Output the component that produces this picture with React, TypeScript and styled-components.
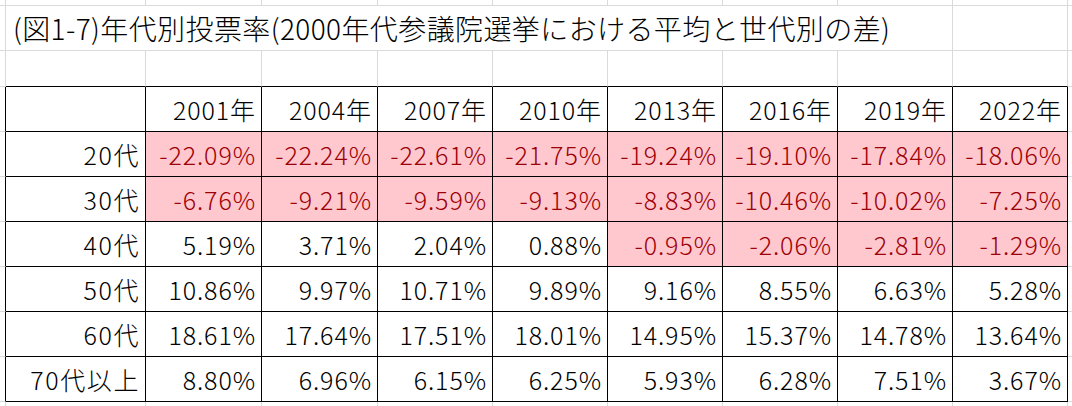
import { Fragment } from "react";
import { createGlobalStyle, styled } from "styled-components";

const GlobalStyle = createGlobalStyle`
  html, body {
    margin: 0;
    padding: 0;
    background: #ffffff;
    overflow: hidden;
  }
  body {
    font-family: "Noto Sans CJK JP", "Noto Sans", sans-serif;
  }
`;

const GRID = "#dadada";
const INK = "#000000";

const Sheet = styled.div`
  display: grid;
  grid-template-columns: 6px 140px 116px 116px 115px 115px 115px 115px 115px 115px 1fr;
  grid-template-rows: 6px 45px 36px repeat(7, 45px) 10px;
  width: 1072px;
  height: 406px;
  overflow: hidden;
  font-size: 25px;
  font-weight: 300;
`;

const Cell = styled.div<{
  $right?: string;
  $bottom?: string;
  $fill?: string;
  $color?: string;
  $span?: number;
}>`
  box-sizing: border-box;
  display: flex;
  align-items: center;
  justify-content: flex-end;
  padding: 0 5px 1px 0;
  white-space: nowrap;
  border-right: 1px solid ${(p) => p.$right ?? GRID};
  border-bottom: 1px solid ${(p) => p.$bottom ?? GRID};
  background: ${(p) => p.$fill ?? "transparent"};
  color: ${(p) => p.$color ?? "#000000"};
  grid-column: ${(p) => (p.$span ? `span ${p.$span}` : "auto")};
  letter-spacing: 0.9px;
`;

const TitleCell = styled(Cell)`
  justify-content: flex-start;
  padding: 0 0 1px 7px;
  overflow: visible;
  font-size: 28px;
  letter-spacing: 0.4px;
`;

const LabelCell = styled(Cell)`
  letter-spacing: 1.6px;
`;

const years = ["2001", "2004", "2007", "2010", "2013", "2016", "2019", "2022"];

const rows: { label: string; values: string[] }[] = [
  { label: "20代", values: ["-22.09%", "-22.24%", "-22.61%", "-21.75%", "-19.24%", "-19.10%", "-17.84%", "-18.06%"] },
  { label: "30代", values: ["-6.76%", "-9.21%", "-9.59%", "-9.13%", "-8.83%", "-10.46%", "-10.02%", "-7.25%"] },
  { label: "40代", values: ["5.19%", "3.71%", "2.04%", "0.88%", "-0.95%", "-2.06%", "-2.81%", "-1.29%"] },
  { label: "50代", values: ["10.86%", "9.97%", "10.71%", "9.89%", "9.16%", "8.55%", "6.63%", "5.28%"] },
  { label: "60代", values: ["18.61%", "17.64%", "17.51%", "18.01%", "14.95%", "15.37%", "14.78%", "13.64%"] },
  { label: "70代以上", values: ["8.80%", "6.96%", "6.15%", "6.25%", "5.93%", "6.28%", "7.51%", "3.67%"] },
];

// a row of empty sheet cells; "edge" darkens the bottom line above the table
function GridRow({ count, edge }: { count: number; edge?: boolean }) {
  return (
    <>
      {Array.from({ length: count }, (_, i) => (
        <Cell key={i} $bottom={edge && i > 0 && i < 10 ? INK : GRID} />
      ))}
    </>
  );
}

export default function App() {
  return (
    <>
      <GlobalStyle />
      <Sheet>
        <GridRow count={11} />

        <Cell />
        <TitleCell $span={8}>
          (図1-7)年代別投票率(2000年代参議院選挙における平均と世代別の差)
        </TitleCell>
        <Cell />
        <Cell />

        <GridRow count={11} edge />

        <Cell $right={INK} />
        <Cell $right={INK} $bottom={INK} />
        {years.map((y) => (
          <Cell key={y} $right={INK} $bottom={INK}>
            {y}年
          </Cell>
        ))}
        <Cell />

        {rows.map((row) => (
          <Fragment key={row.label}>
            <Cell $right={INK} />
            <LabelCell $right={INK} $bottom={INK}>
              {row.label}
            </LabelCell>
            {row.values.map((v, vi) => {
              const bad = v.startsWith("-");
              return (
                <Cell
                  key={vi}
                  $right={INK}
                  $bottom={INK}
                  $fill={bad ? "#ffc7ce" : undefined}
                  $color={bad ? "#9c0006" : undefined}
                >
                  {v}
                </Cell>
              );
            })}
            <Cell />
          </Fragment>
        ))}

        <GridRow count={11} />
      </Sheet>
    </>
  );
}
